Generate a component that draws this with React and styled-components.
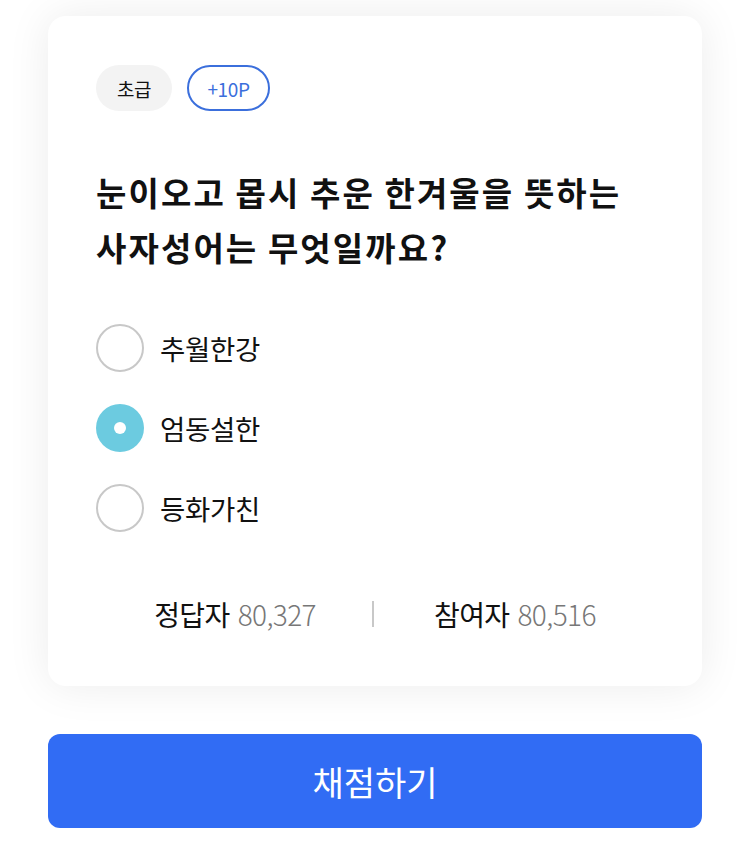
import styled, { createGlobalStyle } from 'styled-components';

const GlobalStyle = createGlobalStyle`
  html, body {
    margin: 0;
    padding: 0;
    background: #ffffff;
  }
  body {
    font-family: "Noto Sans CJK KR", "Noto Sans", sans-serif;
    color: #111;
  }
`;

const Page = styled.div`
  width: 750px;
  padding: 16px 48px 0;
  box-sizing: border-box;
`;

const Card = styled.div`
  background: #fff;
  border-radius: 18px;
  box-shadow: 0 0 44px rgba(0, 0, 0, 0.08);
  padding: 49px 48px 52px;
`;

const TagRow = styled.div`
  display: flex;
  gap: 15px;
`;

const Tag = styled.span`
  display: inline-flex;
  align-items: center;
  justify-content: center;
  height: 46px;
  box-sizing: border-box;
  padding: 0 18px;
  border-radius: 23px;
  font-size: 19px;
  letter-spacing: -0.4px;
  background: ${p => (p.$outline ? '#fff' : '#f3f3f3')};
  border: ${p => (p.$outline ? '2px solid #3b6fdc' : 'none')};
  color: ${p => (p.$outline ? '#3b6fdc' : '#111')};
  min-width: ${p => (p.$outline ? '83px' : '76px')};
`;

const Question = styled.h2`
  margin: 54px 0 0;
  font-size: 33px;
  font-weight: 700;
  line-height: 55px;
  letter-spacing: 2.1px;
  color: #111;
`;

const Options = styled.div`
  margin-top: 33px;
  display: flex;
  flex-direction: column;
`;

const Option = styled.label`
  display: flex;
  align-items: center;
  height: 80px;
  gap: 16px;
  cursor: pointer;
`;

const Radio = styled.span`
  width: 48px;
  height: 48px;
  border-radius: 50%;
  box-sizing: border-box;
  display: flex;
  align-items: center;
  justify-content: center;
  background: ${p => (p.$checked ? '#6ccbe0' : '#fff')};
  border: ${p => (p.$checked ? 'none' : '2px solid #c8c8c8')};

  &::after {
    content: '';
    display: ${p => (p.$checked ? 'block' : 'none')};
    width: 12px;
    height: 12px;
    border-radius: 50%;
    background: #fff;
  }
`;

const OptionText = styled.span`
  font-size: 27.5px;
  letter-spacing: -0.3px;
  color: #111;
`;

const Stats = styled.div`
  margin-top: 46px;
  display: flex;
  align-items: center;
  justify-content: center;
  height: 40px;
  font-size: 28px;
  letter-spacing: -0.6px;
`;

const Stat = styled.span`
  color: #111;
`;

const Num = styled.span`
  color: #777;
  font-weight: 300;
  margin-left: 8px;
`;

const Divider = styled.span`
  width: 2px;
  height: 26px;
  background: #c8c8c8;
  margin: 0 60px 0 56px;
`;

const SubmitButton = styled.button`
  margin-top: 48px;
  width: 100%;
  height: 94px;
  border: none;
  border-radius: 12px;
  background: #316cf4;
  color: #fff;
  font-family: inherit;
  font-size: 34px;
  cursor: pointer;
`;

const options = [
  { label: '추월한강', checked: false },
  { label: '엄동설한', checked: true },
  { label: '등화가친', checked: false },
];

export default function App() {
  return (
    <>
      <GlobalStyle />
      <Page>
        <Card>
          <TagRow>
            <Tag>초급</Tag>
            <Tag $outline>+10P</Tag>
          </TagRow>
          <Question>
            눈이오고 몹시 추운 한겨울을 뜻하는
            <br />
            사자성어는 무엇일까요?
          </Question>
          <Options>
            {options.map(o => (
              <Option key={o.label}>
                <Radio $checked={o.checked} />
                <OptionText>{o.label}</OptionText>
              </Option>
            ))}
          </Options>
          <Stats>
            <Stat>
              정답자<Num>80,327</Num>
            </Stat>
            <Divider />
            <Stat>
              참여자<Num>80,516</Num>
            </Stat>
          </Stats>
        </Card>
        <SubmitButton>채점하기</SubmitButton>
      </Page>
    </>
  );
}
